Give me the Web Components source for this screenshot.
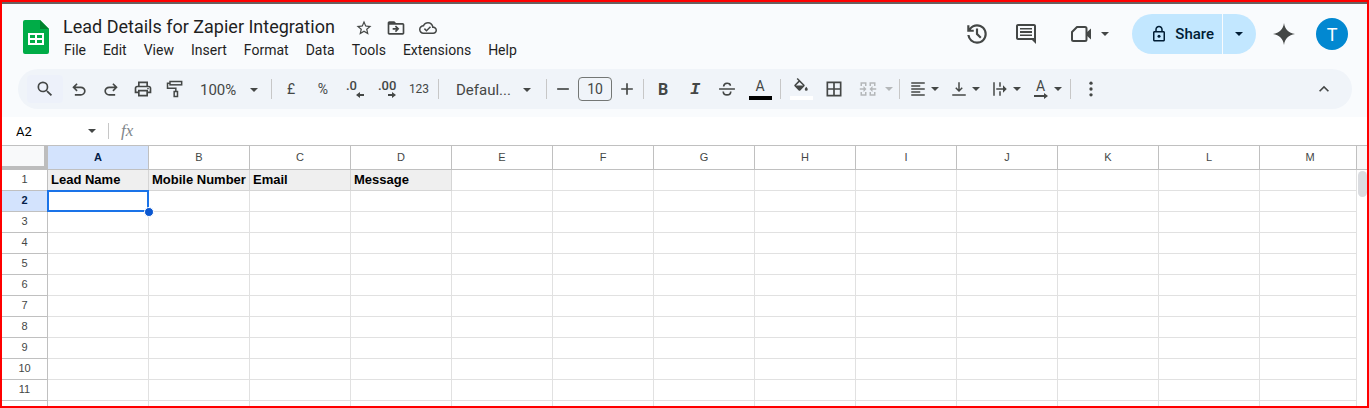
<!DOCTYPE html>
<html lang="en">
<head>
<meta charset="UTF-8">
<meta name="viewport" content="width=device-width, initial-scale=1.0">
<title>Lead Details for Zapier Integration</title>
<style>
    body {
        margin: 0;
        font-family: Roboto, 'Liberation Sans', sans-serif;
    }
</style>
</head>
<body>

<sheet-app>
    <sheet-header slot="header" title-text="Lead Details for Zapier Integration"></sheet-header>
    <sheet-toolbar slot="toolbar"></sheet-toolbar>
    <formula-bar slot="formula" cell="A2"></formula-bar>
    <sheet-grid></sheet-grid>
</sheet-app>

<script>
const ICONS = {
    logo: '<path fill="#00ac47" d="M2 0h15l9 9v23a2 2 0 0 1-2 2H2a2 2 0 0 1-2-2V2a2 2 0 0 1 2-2z"/><path fill="#00832d" d="M17 0l9 9h-9z"/><path fill="#fff" fill-rule="evenodd" d="M5 13h16v12H5zM7 15v3h5v-3zM14 15v3h5v-3zM7 20v3h5v-3zM14 20v3h5v-3z"/>',
    star: '<path d="M22 9.24l-7.19-.62L12 2 9.19 8.63 2 9.24l5.46 4.73L5.82 21 12 17.27 18.18 21l-1.63-7.03L22 9.24zM12 15.4l-3.76 2.27 1-4.28-3.32-2.88 4.38-.38L12 6.1l1.71 4.04 4.38.38-3.32 2.88 1 4.28L12 15.4z"/>',
    move: '<path d="M20 6h-8l-2-2H4c-1.1 0-2 .9-2 2v12c0 1.1.9 2 2 2h16c1.1 0 2-.9 2-2V8c0-1.1-.9-2-2-2zm0 12H4V8h16v10z"/><path d="M12 17l4-4-4-4-1.4 1.4 1.6 1.6H8v2h4.2l-1.6 1.6z"/>',
    cloud: '<path d="M19.35 10.04C18.67 6.59 15.64 4 12 4 9.11 4 6.6 5.64 5.35 8.04 2.34 8.36 0 10.91 0 14c0 3.31 2.69 6 6 6h13c2.76 0 5-2.24 5-5 0-2.64-2.05-4.78-4.65-4.96zM19 18H6c-2.21 0-4-1.79-4-4s1.79-4 4-4h.71C7.37 7.69 9.48 6 12 6c3.04 0 5.5 2.46 5.5 5.5v.5H19c1.66 0 3 1.34 3 3s-1.34 3-3 3zm-9-3.82l-2.09-2.09L6.5 13.5 10 17l6.01-6.01-1.41-1.41z"/>',
    history: '<path d="M12 21q-3.45 0-6.012-2.287T3.05 13H5.1q.35 2.6 2.313 4.3T12 19q2.925 0 4.963-2.037T19 12t-2.037-4.962T12 5q-1.725 0-3.225.8T6.25 8H9v2H3V4h2v2.35q1.275-1.6 3.113-2.475T12 3q1.875 0 3.513.713t2.85 1.924 1.925 2.85T21 12t-.712 3.513-1.925 2.85-2.85 1.925T12 21m2.8-4.8L11 12.4V7h2v4.6l3.2 3.2z"/>',
    comment: '<path fill-rule="evenodd" d="M22 4c0-1.1-.9-2-2-2H4c-1.1 0-2 .9-2 2v12c0 1.1.9 2 2 2h14l4 4V4zM4 4h16v12H4z"/><path d="M6 6h12v1.5H6zM6 9h12v2H6zM6 12.5h12V14H6z"/>',
    camera: '<path fill="none" stroke="currentColor" stroke-width="2" stroke-linejoin="round" d="M3 10l5-5h8a1.5 1.5 0 0 1 1.5 1.5v11A1.5 1.5 0 0 1 16 19H4.5A1.5 1.5 0 0 1 3 17.5z"/><path d="M17 11l5-4.5v11L17 13z"/>',
    lock: '<path d="M18 8h-1V6c0-2.76-2.24-5-5-5S7 3.24 7 6v2H6c-1.1 0-2 .9-2 2v10c0 1.1.9 2 2 2h12c1.1 0 2-.9 2-2V10c0-1.1-.9-2-2-2zM9 6c0-1.66 1.34-3 3-3s3 1.34 3 3v2H9V6zm9 14H6V10h12v10z"/><circle cx="12" cy="15" r="2"/>',
    spark: '<path d="M12 1c.8 6.3 4.7 10.2 11 11-6.3.8-10.2 4.7-11 11-.8-6.3-4.7-10.2-11-11C7.3 11.2 11.2 7.3 12 1z"/>',
    search: '<path d="M15.5 14h-.79l-.28-.27A6.47 6.47 0 0 0 16 9.5 6.5 6.5 0 1 0 9.5 16c1.61 0 3.09-.59 4.23-1.57l.27.28v.79l5 4.99L20.49 19l-4.99-5zm-6 0a4.5 4.5 0 1 1 0-9 4.5 4.5 0 0 1 0 9z"/>',
    undo: '<path d="M7 20v-2h7.1q1.575 0 2.738-1T18 14.5 16.838 12 14.1 11H7.8l2.6 2.6L9 15l-5-5 5-5 1.4 1.4L7.8 9h6.3q2.425 0 4.163 1.575T20 14.5t-1.738 3.925T14.1 20z"/>',
    redo: '<path d="M9.9 20q-2.425 0-4.163-1.575T4 14.5t1.738-3.925T9.9 9h6.3l-2.6-2.6L15 5l5 5-5 5-1.4-1.4 2.6-2.6H9.9q-1.575 0-2.738 1T6 14.5 7.163 17 9.9 18H17v2z"/>',
    print: '<path d="M19 8h-1V3H6v5H5c-1.66 0-3 1.34-3 3v6h4v4h12v-4h4v-6c0-1.66-1.34-3-3-3zM8 5h8v3H8V5zm8 12v2H8v-4h8v2zm2-2v-2H6v2H4v-4c0-.55.45-1 1-1h14c.55 0 1 .45 1 1v4h-2z"/><circle cx="18" cy="11.5" r="1"/>',
    roller: '<g fill="none" stroke="currentColor" stroke-width="1.8"><rect x="6" y="3" width="14" height="4"/><path d="M6 5H3v6h10v4"/><rect x="11" y="15" width="4" height="6"/></g>',
    minus: '<path d="M5 11h14v2H5z"/>',
    plus: '<path d="M5 11h6V5h2v6h6v2h-6v6h-2v-6H5z"/>',
    strike: '<g fill="none" stroke="currentColor" stroke-width="2"><path d="M2.5 12h19M8 9c0-5 8-5 8-1M7.5 15c0 5.5 9 5.5 9 0"/></g>',
    fill: '<path fill-rule="evenodd" d="M16.56 8.94L7.62 0 6.21 1.41l2.38 2.38-5.15 5.15a1.49 1.49 0 0 0 0 2.12l5.5 5.5c.29.29.68.44 1.06.44s.77-.15 1.06-.44l5.5-5.5c.59-.58.59-1.53 0-2.12zM5.21 10L10 5.21 14.79 10zM19 11.5s-2 2.17-2 3.5a2 2 0 0 0 4 0c0-1.33-2-3.5-2-3.5z"/>',
    borders: '<path fill-rule="evenodd" d="M3 3v18h18V3H3zm8 16H5v-6h6v6zm0-8H5V5h6v6zm8 8h-6v-6h6v6zm0-8h-6V5h6v6z"/>',
    merge: '<g fill="none" stroke="currentColor" stroke-width="2"><path d="M9 4H3v4M3 16v4h6M15 4h6v4M21 16v4h-6M9 3v5M15 3v5M9 16v5M15 16v5M1 12h7M23 12h-7"/></g><path d="M6 8l4 4-4 4zM18 8l-4 4 4 4z"/>',
    left: '<path d="M3 3h18v2H3zM3 7h12v2H3zM3 11h18v2H3zM3 15h12v2H3zM3 19h18v2H3z"/>',
    bottom: '<path d="M17 11l-1.4-1.4-2.6 2.6V3h-2v9.200L8.400 9.600 7 11l5 5zM3 19v2h18v-2z"/>',
    wrap: '<path d="M3 3h2v18H3zM11 3h2v6h-2zM11 15h2v6h-2zM7 11h9V7l5 5-5 5v-4H7z"/>',
    more: '<circle cx="12" cy="5" r="2"/><circle cx="12" cy="12" r="2"/><circle cx="12" cy="19" r="2"/>',
    up: '<path d="M12 8l-6 6 1.41 1.41L12 10.83l4.59 4.58L18 14z"/>',
    caret: '<path d="M0 0h10L5 5z"/>',
    arrowLeft: '<path d="M0 3l4-3v2h4v2H4v2z"/>',
    arrowRight: '<path d="M8 3L4 0v2H0v2h4v2z"/>',
    arrowLong: '<path d="M14 3l-4-3v2H0v2h10v2z"/>'
};

const BOXES = {
    logo: '0 0 26 34',
    caret: '0 0 10 5',
    arrowLeft: '0 0 8 6',
    arrowRight: '0 0 8 6',
    arrowLong: '0 0 14 6'
};

class SheetIcon extends HTMLElement {

    constructor() {
        super();
        this.attachShadow({ mode: 'open' });
    }

    static get styles() {
        return /*css*/`
        :host{
            display: block;
            flex: none;
            width: 20px;
            height: 20px;
        }

        svg{
            display: block;
            width: 100%;
            height: 100%;
            fill: currentColor;
        }
        `
    }

    connectedCallback() {
        const name = this.getAttribute('name');
        this.shadowRoot.innerHTML = /*html*/`
        <style>${SheetIcon.styles}</style>
        <svg viewBox="${BOXES[name] || '0 0 24 24'}" aria-hidden="true">${ICONS[name]}</svg>
        `
    }

}

class ToolButton extends HTMLElement {

    constructor() {
        super();
        this.attachShadow({ mode: 'open' });
    }

    static get styles() {
        return /*css*/`
        :host{
            display: block;
            flex: none;
            width: 32px;
            height: 28px;
        }

        button{
            display: flex;
            align-items: center;
            justify-content: center;
            gap: 4px;
            width: 100%;
            height: 100%;
            padding: 0;
            border: 0;
            border-radius: 4px;
            background: none;
            color: inherit;
            font: inherit;
        }

        :host([on]) button{
            background: #edf1fa;
        }
        `
    }

    connectedCallback() {
        this.shadowRoot.innerHTML = /*html*/`
        <style>${ToolButton.styles}</style>
        <button type="button" aria-label="${this.getAttribute('label')}"><slot></slot></button>
        `
    }

}

class SheetHeader extends HTMLElement {

    constructor() {
        super();
        this.attachShadow({ mode: 'open' });
    }

    static get styles() {
        return /*css*/`
        :host{
            display: flex;
            align-items: flex-start;
            height: 65px;
            padding: 0 19px 0 21px;
            color: #444746;
        }

        .logo{
            width: 26px;
            height: 34px;
            margin-top: 16px;
        }

        .doc{
            flex: 1;
            margin-left: 7px;
            padding-top: 11px;
        }

        .name{
            display: flex;
            align-items: center;
            height: 25px;
            padding-left: 7px;
        }

        h1{
            margin: 0 13px 0 0;
            padding-bottom: 2px;
            color: #1f1f1f;
            font-size: 18px;
            font-weight: 400;
            line-height: 24px;
        }

        .name tool-button{
            height: 24px;
        }

        .star, .cloud{
            width: 18px;
            height: 18px;
        }

        nav{
            display: flex;
            gap: 1px;
        }

        nav button{
            padding: 0 8px;
            border: 0;
            background: none;
            color: #1f1f1f;
            font: inherit;
            font-size: 14px;
            line-height: 20px;
        }

        .actions{
            display: flex;
            align-items: center;
            padding-top: 10px;
        }

        .big{
            width: 24px;
            height: 24px;
        }

        .history{
            width: 26px;
            height: 26px;
        }

        .caret{
            width: 8px;
            height: 4px;
        }

        .actions tool-button{
            width: 49px;
        }

        .actions .meet{
            width: 56px;
            margin: 0 15px 0 11px;
        }

        .meet .caret{
            margin-left: 4px;
        }

        .share{
            display: flex;
            height: 40px;
            gap: 1px;
        }

        .share button{
            display: flex;
            align-items: center;
            border: 0;
            background: #c2e7ff;
            color: #001d35;
            font: inherit;
            font-size: 15px;
            font-weight: 500;
        }

        .share button:first-child{
            gap: 7px;
            padding: 0 8px 0 18px;
            border-radius: 20px 0 0 20px;
        }

        .share button:last-child{
            padding: 0 13px 0 12px;
            border-radius: 0 20px 20px 0;
        }

        .lock{
            width: 18px;
            height: 18px;
        }

        .actions .gem{
            width: 32px;
            margin: 0 16px 0 12px;
        }

        .avatar{
            width: 32px;
            height: 32px;
            padding: 0;
            border: 0;
            border-radius: 50%;
            background: #0288d1;
            color: #ffffff;
            font: inherit;
            font-size: 18px;
        }
        `
    }

    connectedCallback() {
        const menus = ['File', 'Edit', 'View', 'Insert', 'Format', 'Data', 'Tools', 'Extensions', 'Help'];
        this.shadowRoot.innerHTML = /*html*/`
        <style>${SheetHeader.styles}</style>
        <sheet-icon class="logo" name="logo"></sheet-icon>
        <div class="doc">
            <div class="name">
                <h1>${this.getAttribute('title-text')}</h1>
                <tool-button label="Star"><sheet-icon class="star" name="star"></sheet-icon></tool-button>
                <tool-button label="Move"><sheet-icon name="move"></sheet-icon></tool-button>
                <tool-button label="Document status"><sheet-icon class="cloud" name="cloud"></sheet-icon></tool-button>
            </div>
            <nav>${menus.map(menu => `<button type="button">${menu}</button>`).join('')}</nav>
        </div>
        <div class="actions">
            <tool-button label="Version history"><sheet-icon class="history" name="history"></sheet-icon></tool-button>
            <tool-button label="Comments"><sheet-icon class="big" name="comment"></sheet-icon></tool-button>
            <tool-button class="meet" label="Join a call">
                <sheet-icon class="big" name="camera"></sheet-icon>
                <sheet-icon class="caret" name="caret"></sheet-icon>
            </tool-button>
            <div class="share">
                <button type="button"><sheet-icon class="lock" name="lock"></sheet-icon>Share</button>
                <button type="button" aria-label="Share options"><sheet-icon class="caret" name="caret"></sheet-icon></button>
            </div>
            <tool-button class="gem" label="Ask Gemini"><sheet-icon class="big" name="spark"></sheet-icon></tool-button>
            <button class="avatar" type="button">T</button>
        </div>
        `
    }

}

class SheetToolbar extends HTMLElement {

    constructor() {
        super();
        this.attachShadow({ mode: 'open' });
    }

    static get styles() {
        return /*css*/`
        :host{
            display: flex;
            align-items: center;
            height: 40px;
            margin: 0 15px 0 16px;
            padding: 0 12px 0 9px;
            box-sizing: border-box;
            border-radius: 20px;
            background: #f0f4f9;
            color: #444746;
            font-size: 14px;
        }

        hr{
            flex: none;
            width: 1px;
            height: 20px;
            margin: 0 3px;
            border: 0;
            background: #c7c7c7;
        }

        .search{
            width: 36px;
        }

        .num{
            font-size: 14px;
        }

        .fmt{
            font-size: 12px;
        }

        .mark{
            width: 34px;
        }

        .step{
            width: 26px;
        }

        .pick{
            display: flex;
            align-items: center;
            box-sizing: border-box;
            padding: 2px 10px 0 9px;
        }

        .zoom{
            width: 77px;
        }

        .font{
            width: 101px;
            padding: 2px 12px 0 14px;
        }

        select{
            flex: 1;
            min-width: 0;
            padding: 0;
            border: 0;
            appearance: none;
            background: none;
            color: inherit;
            font: inherit;
            font-size: 15px;
        }

        input{
            width: 34px;
            height: 24px;
            margin: 0 2px;
            padding: 0;
            box-sizing: border-box;
            border: 1px solid #747775;
            border-radius: 4px;
            background: none;
            color: inherit;
            font: inherit;
            text-align: center;
        }

        .caret{
            width: 8px;
            height: 4px;
        }

        .stack{
            display: flex;
            flex-direction: column;
            align-items: center;
            line-height: 14px;
        }

        .dec{
            align-items: flex-start;
            width: 18px;
            font-size: 13px;
            font-weight: 500;
            line-height: 12px;
        }

        .small{
            align-self: flex-end;
            width: 8px;
            height: 6px;
        }

        .long{
            width: 14px;
            height: 6px;
        }

        .bar{
            width: 23px;
            height: 4px;
            margin-top: 3px;
            background: #000000;
        }

        .white{
            margin-top: 0;
            background: #ffffff;
        }

        .bucket{
            width: 18px;
            height: 18px;
        }

        .b{
            font-size: 16px;
            font-weight: 700;
        }

        .i{
            font: italic 700 17px 'Liberation Mono', monospace;
        }

        .combo{
            width: 41px;
        }

        .combo sheet-icon:not(.caret, .long){
            width: 18px;
            height: 18px;
        }

        .combo .stack{
            width: 18px;
        }

        .off{
            margin-left: 5px;
            color: #b4b7b9;
        }

        .off .caret{
            margin-left: 4px;
        }

        .collapse{
            margin-left: auto;
        }
        `
    }

    connectedCallback() {
        const caret = '<sheet-icon class="caret" name="caret"></sheet-icon>';
        this.shadowRoot.innerHTML = /*html*/`
        <style>${SheetToolbar.styles}</style>
        <tool-button class="search" label="Search the menus" on><sheet-icon name="search"></sheet-icon></tool-button>
        <tool-button label="Undo"><sheet-icon name="undo"></sheet-icon></tool-button>
        <tool-button label="Redo"><sheet-icon name="redo"></sheet-icon></tool-button>
        <tool-button label="Print"><sheet-icon name="print"></sheet-icon></tool-button>
        <tool-button label="Paint format"><sheet-icon name="roller"></sheet-icon></tool-button>
        <label class="pick zoom"><select aria-label="Zoom"><option>100%</option></select>${caret}</label>
        <hr>
        <tool-button class="num" label="Format as currency">£</tool-button>
        <tool-button class="num" label="Format as percent">%</tool-button>
        <tool-button label="Decrease decimal places"><span class="stack dec">.0<sheet-icon class="small" name="arrowLeft"></sheet-icon></span></tool-button>
        <tool-button label="Increase decimal places"><span class="stack dec">.00<sheet-icon class="small" name="arrowRight"></sheet-icon></span></tool-button>
        <tool-button class="fmt" label="More formats">123</tool-button>
        <hr>
        <label class="pick font"><select aria-label="Font"><option>Defaul...</option></select>${caret}</label>
        <hr>
        <tool-button class="step" label="Decrease font size"><sheet-icon name="minus"></sheet-icon></tool-button>
        <input type="text" aria-label="Font size" value="10">
        <tool-button class="step" label="Increase font size"><sheet-icon name="plus"></sheet-icon></tool-button>
        <hr>
        <tool-button class="b" label="Bold">B</tool-button>
        <tool-button class="i" label="Italic">I</tool-button>
        <tool-button label="Strikethrough"><sheet-icon name="strike"></sheet-icon></tool-button>
        <tool-button class="mark" label="Text colour"><span class="stack">A<span class="bar"></span></span></tool-button>
        <hr>
        <tool-button class="mark" label="Fill colour"><span class="stack"><sheet-icon class="bucket" name="fill"></sheet-icon><span class="bar white"></span></span></tool-button>
        <tool-button label="Borders"><sheet-icon name="borders"></sheet-icon></tool-button>
        <tool-button class="combo off" label="Merge cells"><sheet-icon name="merge"></sheet-icon>${caret}</tool-button>
        <hr>
        <tool-button class="combo" label="Horizontal align"><sheet-icon name="left"></sheet-icon>${caret}</tool-button>
        <tool-button class="combo" label="Vertical align"><sheet-icon name="bottom"></sheet-icon>${caret}</tool-button>
        <tool-button class="combo" label="Text wrapping"><sheet-icon name="wrap"></sheet-icon>${caret}</tool-button>
        <tool-button class="combo" label="Text rotation"><span class="stack">A<sheet-icon class="long" name="arrowLong"></sheet-icon></span>${caret}</tool-button>
        <hr>
        <tool-button class="mark" label="More"><sheet-icon name="more"></sheet-icon></tool-button>
        <tool-button class="collapse" label="Hide the menus"><sheet-icon name="up"></sheet-icon></tool-button>
        `
    }

}

class FormulaBar extends HTMLElement {

    constructor() {
        super();
        this.attachShadow({ mode: 'open' });
    }

    static get styles() {
        return /*css*/`
        :host{
            display: flex;
            align-items: center;
            height: 28px;
            background: #ffffff;
            color: #444746;
        }

        input{
            width: 72px;
            padding: 0 0 0 14px;
            border: 0;
            outline: 0;
            background: none;
            color: #000000;
            font: inherit;
            font-size: 13px;
        }

        .formula{
            flex: 1;
        }

        .caret{
            width: 8px;
            height: 4px;
        }

        hr{
            width: 1px;
            height: 16px;
            margin: 0 12px;
            border: 0;
            background: #c7c7c7;
        }

        span{
            color: #80868b;
            font: italic 400 17px 'Liberation Serif', serif;
        }
        `
    }

    connectedCallback() {
        this.shadowRoot.innerHTML = /*html*/`
        <style>${FormulaBar.styles}</style>
        <input type="text" aria-label="Name box" value="${this.getAttribute('cell')}">
        <sheet-icon class="caret" name="caret"></sheet-icon>
        <hr>
        <span>fx</span>
        <input class="formula" type="text" aria-label="Formula">
        `
    }

}

class SheetGrid extends HTMLElement {

    constructor() {
        super();
        this.attachShadow({ mode: 'open' });
    }

    static get styles() {
        return /*css*/`
        :host{
            display: flex;
            align-items: flex-start;
            border-top: 1px solid #c0c0c0;
            background: #ffffff;
        }

        table{
            flex: 1;
            width: 0;
            table-layout: fixed;
            border-collapse: separate;
            border-spacing: 0;
        }

        th, td{
            position: relative;
            box-sizing: border-box;
            width: 101px;
            height: 21px;
            padding: 0 3px;
            border: 0 solid #e1e1e1;
            border-width: 0 1px 1px 0;
            font: 13px/20px 'Liberation Sans', Arial, sans-serif;
            text-align: left;
            white-space: nowrap;
        }

        th{
            border-color: #c0c0c0;
            color: #444746;
            font-size: 11px;
            line-height: 18px;
            text-align: center;
            vertical-align: top;
        }

        thead th{
            height: 24px;
            line-height: 22px;
        }

        thead th:first-child{
            width: 46px;
            border-width: 0 4px 4px 0;
            border-color: #bdbdbd;
            background: #f8f9fa;
        }

        thead th:last-child, td:last-child{
            width: auto;
            padding: 0 0 0 4px;
        }

        .on{
            background: #d3e3fd;
            color: #041e49;
            font-weight: 700;
        }

        .title{
            background: #efefef;
            border-color: #d5d5d5;
            color: #000000;
            font-weight: 700;
        }

        .cursor{
            position: absolute;
            inset: -1px;
            z-index: 1;
            border: 2px solid #1a73e8;
        }

        .cursor::after{
            content: '';
            position: absolute;
            right: -7px;
            bottom: -7px;
            width: 8px;
            height: 8px;
            border: 1px solid #ffffff;
            border-radius: 50%;
            background: #0b57d0;
        }

        .scroll{
            flex: none;
            align-self: stretch;
            width: 10px;
        }

        .scroll::before{
            content: '';
            display: block;
            height: 23px;
            border-bottom: 1px solid #c0c0c0;
            background: #f8f8f8;
        }

        .scroll::after{
            content: '';
            display: block;
            height: 26px;
            margin: 1px 0 0 1px;
            border-radius: 5px;
            background: #dadce0;
        }
        `
    }

    connectedCallback() {
        const columns = [...'ABCDEFGHIJKLM'];
        const titles = ['Lead Name', 'Mobile Number', 'Email', 'Message'];
        let rows = '';
        for (let row = 1; row <= 12; row++) {
            const cells = columns.map((column, i) => {
                if (row === 1 && titles[i]) return `<td class="title">${titles[i]}</td>`;
                if (row === 2 && i === 0) return '<td><div class="cursor"></div></td>';
                return '<td></td>';
            });
            rows += `<tr><th scope="row" class="${row === 2 ? 'on' : ''}">${row < 12 ? row : ''}</th>${cells.join('')}</tr>`;
        }
        this.shadowRoot.innerHTML = /*html*/`
        <style>${SheetGrid.styles}</style>
        <table>
            <thead>
                <tr><th></th>${columns.map((column, i) => `<th scope="col" class="${i === 0 ? 'on' : ''}">${column}</th>`).join('')}</tr>
            </thead>
            <tbody>${rows}</tbody>
        </table>
        <div class="scroll"></div>
        `
    }

}

class SheetApp extends HTMLElement {

    constructor() {
        super();
        this.attachShadow({ mode: 'open' });
    }

    static get styles() {
        return /*css*/`
        :host{
            display: flex;
            flex-direction: column;
            height: 100vh;
            box-sizing: border-box;
            border: 2px solid #ff0000;
            overflow: hidden;
            background: #f9fbfd;
        }

        header{
            padding-bottom: 8px;
            border-top: 2px solid #6b5f5f;
        }

        main{
            flex: 1;
            min-height: 0;
            overflow: hidden;
        }
        `
    }

    connectedCallback() {
        this.shadowRoot.innerHTML = /*html*/`
        <style>${SheetApp.styles}</style>
        <header>
            <slot name="header"></slot>
            <slot name="toolbar"></slot>
        </header>
        <slot name="formula"></slot>
        <main><slot></slot></main>
        `
    }

}

customElements.define('sheet-icon', SheetIcon);
customElements.define('tool-button', ToolButton);
customElements.define('sheet-header', SheetHeader);
customElements.define('sheet-toolbar', SheetToolbar);
customElements.define('formula-bar', FormulaBar);
customElements.define('sheet-grid', SheetGrid);
customElements.define('sheet-app', SheetApp);
</script>
</body>
</html>
